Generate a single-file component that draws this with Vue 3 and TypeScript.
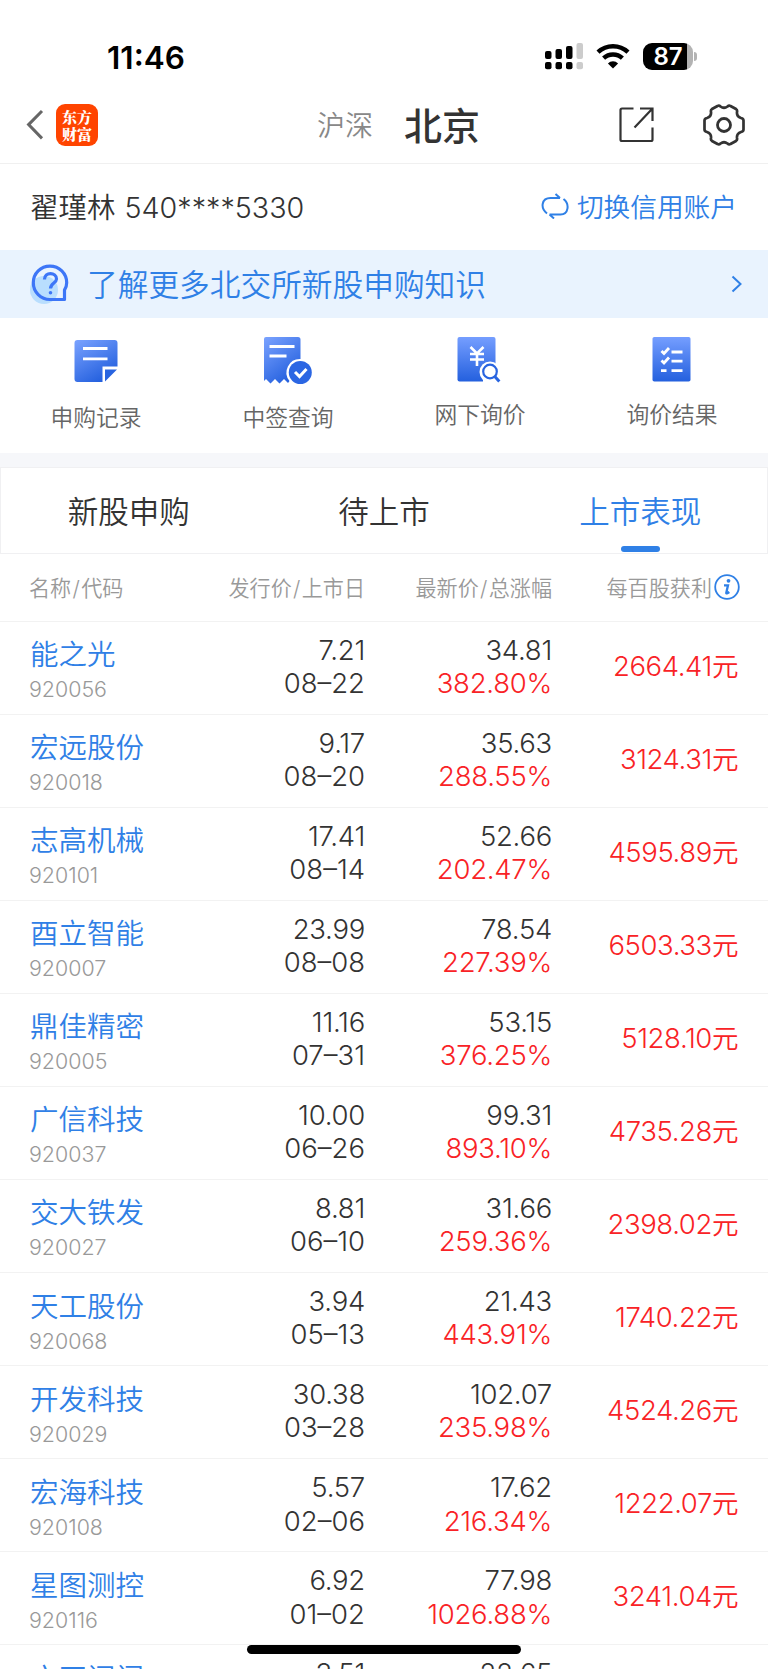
<script setup lang="ts">
interface Stock {
  name: string
  code: string
  issue: string
  date: string
  price: string
  change: string
  profit: string
}

const make = (
  name: string, code: string, issue: string, date: string,
  price: string, change: string, profit: string,
): Stock => ({ name, code, issue, date, price, change, profit })

const stocks: Stock[] = [
  make('能之光', '920056', '7.21', '08–22', '34.81', '382.80%', '2664.41'),
  make('宏远股份', '920018', '9.17', '08–20', '35.63', '288.55%', '3124.31'),
  make('志高机械', '920101', '17.41', '08–14', '52.66', '202.47%', '4595.89'),
  make('酉立智能', '920007', '23.99', '08–08', '78.54', '227.39%', '6503.33'),
  make('鼎佳精密', '920005', '11.16', '07–31', '53.15', '376.25%', '5128.10'),
  make('广信科技', '920037', '10.00', '06–26', '99.31', '893.10%', '4735.28'),
  make('交大铁发', '920027', '8.81', '06–10', '31.66', '259.36%', '2398.02'),
  make('天工股份', '920068', '3.94', '05–13', '21.43', '443.91%', '1740.22'),
  make('开发科技', '920029', '30.38', '03–28', '102.07', '235.98%', '4524.26'),
  make('宏海科技', '920108', '5.57', '02–06', '17.62', '216.34%', '1222.07'),
  make('星图测控', '920116', '6.92', '01–02', '77.98', '1026.88%', '3241.04'),
  make('方正阀门', '', '3.51', '', '22.65', '', ''),
]
</script>

<template>
  <div class="screen">
    <div class="status">
      <span class="clock">11:46</span>
      <svg class="signal" width="38" height="27" viewBox="0 0 38 27">
        <rect x="0" y="8" width="6.5" height="8" rx="2" />
        <rect x="10.5" y="6" width="6.5" height="10" rx="2" />
        <rect x="21" y="3" width="6.5" height="13" rx="2" />
        <rect x="31.5" y="0" width="6.5" height="16" rx="2" fill="#ccc" />
        <rect x="0" y="19" width="6.5" height="7.3" rx="2" />
        <rect x="10.5" y="19" width="6.5" height="7.3" rx="2" />
        <rect x="21" y="19" width="6.5" height="7.3" rx="2" />
        <rect x="31.5" y="19" width="6.5" height="7.3" rx="2" fill="#ccc" />
      </svg>
      <svg class="wifi" width="34" height="25" viewBox="0 0 34 25">
        <path d="M2 8.2a21.8 21.8 0 0 1 30 0M7.6 14.2a13.7 13.7 0 0 1 18.8 0" fill="none" stroke="#000" stroke-width="4.4" />
        <path d="M17 24.5 11.9 19.4a7.3 7.3 0 0 1 10.2 0z" />
      </svg>
      <div class="battery">
        <span class="charge">87</span>
        <i class="nub"></i>
      </div>
    </div>

    <header class="nav">
      <svg class="back" width="18" height="32" viewBox="0 0 18 32">
        <path d="M16 2 2.6 15.6 16 29.4" fill="none" stroke="#666" stroke-width="3" />
      </svg>
      <div class="brand"><span>东方</span><span>财富</span></div>
      <span class="market">沪深</span>
      <span class="market current">北京</span>
      <svg class="share" width="36" height="36" viewBox="0 0 36 36">
        <path d="M14.5 1.5H3Q1.5 1.5 1.5 3V32.5Q1.5 34 3 34H32Q33.5 34 33.5 32.5V20.5M21 1.5H33.500V14M33.500 1.500 15.500 20.500" fill="none" stroke="#333" stroke-width="2.200" />
      </svg>
      <svg class="gear" width="42" height="42" viewBox="0 0 42 42">
        <path d="M14.500 2Q16 1 17.500 2.500Q21 5 24.500 2.500Q26 1 27.500 2L33 5Q34.500 6 34 8Q33.500 12.500 38 14Q40.500 14.500 40.500 16.500V25.500Q40.500 27.500 38 28Q33.500 29.500 34 34Q34.500 36 33 37L27.500 40Q26 41 24.500 39.500Q21 37 17.500 39.500Q16 41 14.500 40L9 37Q7.500 36 8 34Q8.500 29.500 4 28Q1.500 27.500 1.500 25.500V16.500Q1.500 14.500 4 14Q8.500 12.500 8 8Q7.500 6 9 5Z" fill="none" stroke="#333" stroke-width="2.700" />
        <circle cx="21" cy="21" r="6.500" fill="none" stroke="#333" stroke-width="2.800" />
      </svg>
    </header>

    <section class="account">
      <span class="owner">翟瑾林 <span class="num">540****5330</span></span>
      <svg class="swap" width="28" height="26" viewBox="0 0 28 26">
        <path d="M6 20.500C-1 15 .5 5 9.500 5H19M14.500 1 19 5M22.500 6C29 11 27.500 21.500 19.500 21.500H8.500M13 25.500 8.500 21.500" fill="none" stroke="#2f80e6" stroke-width="2" />
      </svg>
      <span class="switch">切换信用账户</span>
    </section>

    <section class="notice">
      <svg class="help" width="42" height="42" viewBox="0 0 42 42">
        <circle cx="15" cy="27" r="14" fill="#b9defe" />
        <path d="M35.500 36.500H21A16.700 16.700 0 1 1 37.700 19.800Q37.700 24 35.500 27Z" fill="none" stroke="#3d76f7" stroke-width="3.200" stroke-linejoin="round" />
        <path d="M15.500 16.500C15.500 8.500 27.500 9 27.500 16C27.500 20 21.500 20 21.500 25.500" fill="none" stroke="#3d76f7" stroke-width="3.200" />
        <circle cx="21.500" cy="29.800" r="1.800" fill="#3d76f7" />
      </svg>
      <span class="notice-text">了解更多北交所新股申购知识</span>
      <svg class="more" width="12" height="18" viewBox="0 0 12 18">
        <path d="m1.500 1.500 8 7.500-8 7.500" fill="none" stroke="#2f80e6" stroke-width="2" />
      </svg>
    </section>

    <nav class="actions">
      <div class="action">
        <svg width="50" height="50" viewBox="0 0 50 50">
          <defs>
            <linearGradient id="fill" x1="0" y1="0" x2=".6" y2="1"><stop stop-color="#7ba3ff" /><stop offset="1" stop-color="#2460de" /></linearGradient>
            <linearGradient id="down" x1="0" y1="0" x2="0" y2="1"><stop stop-color="#759eff" /><stop offset="1" stop-color="#2460de" /></linearGradient>
          </defs>
          <path d="M6.500 3h37q3 0 3 3V29.500H31.500v15.500h-25q-3 0-3-3v-36q0-3 3-3Z" fill="url(#fill)" />
          <path d="M34 32.500h12L34 44.500Z" fill="#2864e0" />
          <path d="M12 11.500h24.500M12 21.800h24.500" stroke="#fff" stroke-width="2.800" />
        </svg>
        <span>申购记录</span>
      </div>
      <div class="action">
        <svg width="50" height="50" viewBox="0 0 50 50">
          <path d="M3 0h32q2.500 0 2.500 2.500V22A13.500 13.500 0 0 0 26.500 44L25 46 21 42 16.500 46.500 12 42 7.500 46.500 3 42 1 44V2q0-2 2-2Z" fill="url(#fill)" />
          <circle cx="37.300" cy="35.500" r="11.500" fill="#2b66e3" />
          <path d="M6.500 9.500h25M6.500 19h17" stroke="#fff" stroke-width="2.800" />
          <path d="m32 35 4.500 4.500 7-7.500" fill="none" stroke="#fff" stroke-width="3" />
        </svg>
        <span>中签查询</span>
      </div>
      <div class="action raised">
        <svg width="50" height="50" viewBox="0 0 50 50">
          <path d="M4.500 0h34q2 0 2 2v40.500q0 2-2 2h-34q-2 0-2-2V2q0-2 2-2Z" fill="url(#down)" />
          <path d="M15.500 10 22 16.500l6.500-6.500M22 16.500v12.500M15 17h14M15 22.500h14" fill="none" stroke="#fff" stroke-width="2.600" />
          <circle cx="35" cy="35" r="10.500" fill="#fff" /><path d="M28 42h14v6H28z" fill="#fff" />
          <circle cx="35" cy="34.500" r="6.800" fill="#fff" stroke="#2864e0" stroke-width="2.200" />
          <path d="m39.800 39.500 4.500 5" stroke="#2864e0" stroke-width="3" />
        </svg>
        <span>网下询价</span>
      </div>
      <div class="action raised">
        <svg width="50" height="50" viewBox="0 0 50 50">
          <rect x="5.500" y="0" width="38" height="44.500" rx="1.800" fill="url(#down)" />
          <path d="m14.500 14 2.500 2.500 5-5.500M14.500 23.500 17 26l5-5.500M24.500 15H35.500M24.500 24.200H35.500M24.500 33.700H35.500M14 33.700h5.500" fill="none" stroke="#fff" stroke-width="2.800" />
        </svg>
        <span>询价结果</span>
      </div>
    </nav>

    <nav class="tabs">
      <span class="tab">新股申购</span>
      <span class="tab">待上市</span>
      <span class="tab active">上市表现</span>
    </nav>

    <div class="cols head">
      <span>名称<i class="slash">/</i>代码</span>
      <span class="right">发行价<i class="slash">/</i>上市日</span>
      <span class="right">最新价<i class="slash">/</i>总涨幅</span>
      <span class="gain">每百股获利<svg width="26" height="26" viewBox="0 0 26 26">
        <circle cx="13" cy="13" r="11.800" fill="none" stroke="#2f80e6" stroke-width="1.800" />
        <circle cx="14.500" cy="6.800" r="1.900" fill="#2f80e6" />
        <path d="M10 11.300h4L12.300 18.800q-.2 1.500 3-.800" fill="none" stroke="#2f80e6" stroke-width="2.300" />
      </svg></span>
    </div>

    <div v-for="stock in stocks" :key="stock.name" class="cols row">
      <div class="title">
        <span class="name">{{ stock.name }}</span>
        <span class="code">{{ stock.code }}</span>
      </div>
      <div class="pair"><span class="tight">{{ stock.issue }}</span><span>{{ stock.date }}</span></div>
      <div class="pair"><span class="tight">{{ stock.price }}</span><span class="tight red">{{ stock.change }}</span></div>
      <div class="profit red"><template v-if="stock.profit">{{ stock.profit }}<span class="yuan">元</span></template></div>
    </div>

    <div class="home"></div>
  </div>
</template>

<style>
body { margin: 0; background: #fff; }
</style>

<style scoped>
.screen {
  position: relative; width: 768px; height: 1669px; overflow: hidden; background: #fff;
  font-family: Inter, "Noto Sans CJK SC", sans-serif; font-weight: 350; color: #333;
}
svg { display: block; flex: none; }
span { white-space: nowrap; }
.status { display: flex; align-items: flex-start; height: 84px; box-sizing: border-box; padding: 43px 70px 0 107px; }
.clock { font-size: 31.500px; line-height: 29px; font-weight: 600; color: #000; width: 438px; }
.wifi { margin: 1px 13px 0 13px; }
.battery { position: relative; width: 50px; height: 27px; border-radius: 9px; background: linear-gradient(90deg, #000 44px, #b3b3b3 44px); }
.charge { display: block; text-align: center; font-size: 24px; line-height: 27px; font-weight: 600; color: #fff; }
.nub { position: absolute; left: 51px; top: 9px; width: 3px; height: 9px; border-radius: 0 4px 4px 0; background: #b3b3b3; }
.nav { display: flex; align-items: center; height: 79px; border-bottom: 1px solid #f0f0f0; padding-left: 26px; }
.nav > * { margin-top: 2px; }
.brand {
  width: 42px; height: 42px; margin-left: 12px; border-radius: 9px; background: #ff4400; color: #fff;
  display: flex; flex-direction: column; align-items: center; justify-content: center;
  font: 900 15px/17px "Noto Serif CJK SC", "Noto Sans CJK SC", sans-serif;
}
.market { font-size: 28px; line-height: 40px; color: #888; margin-left: 219px; margin-top: 4px; }
.market.current { font-size: 38px; font-weight: 500; color: #333; margin-left: 31px; }
.share { margin-left: 139px; }
.gear { margin-left: 48px; }
.account { display: flex; align-items: center; height: 83px; padding: 0 31px 3px 30px; }
.owner { font-size: 28.500px; flex: 1; }
.num { font-size: 28.700px; margin-left: 1px; }
.swap { margin-right: 8px; }
.switch { font-size: 26.700px; color: #2f80e6; }
.notice { display: flex; align-items: center; height: 68px; padding: 0 25px 0 29px; background: #e9f3fe; color: #2f80e6; }
.notice-text { font-size: 30.700px; margin: -4px 0 0 16px; flex: 1; }
.actions { display: grid; grid-template-columns: repeat(4, 192px); height: 135px; color: #666; border-bottom: 14px solid #f6f7fa; }
.action { display: flex; flex-direction: column; align-items: center; padding-top: 19px; }
.action span { font-size: 22.800px; line-height: 32px; margin-top: 15px; }
.action.raised span { margin-top: 12px; }
.tabs { display: grid; grid-template-columns: repeat(3, 1fr); height: 85px; border: 1px solid #f0f0f2; font-size: 30.500px; }
.tab { display: flex; justify-content: center; line-height: 88px; position: relative; }
.active { color: #2f80e6; padding-left: 2px; }
.active::after { content: ""; position: absolute; bottom: 4px; width: 39px; height: 6px; border-radius: 3px; background: #2f80e6; }
.cols { display: grid; grid-template-columns: 170px 165px 187px 186px; box-sizing: border-box; padding-left: 30px; border-bottom: 1px solid #f2f2f2; }
.head { height: 67.500px; align-items: center; font-size: 21.100px; color: #999; padding-bottom: 0; }
.head > span { margin-left: -1px; }
.slash { font-style: normal; margin: 0 1.300px; }
.right { text-align: right; }
.gain { display: flex; align-items: center; justify-content: flex-end; margin-right: -2px; }
.gain svg { margin-left: 2px; }
.row { height: 93.080px; }
.title { display: flex; flex-direction: column; }
.name { font-size: 28.500px; line-height: 40px; color: #2f80e6; margin-top: 13.500px; }
.code { font-size: 21.400px; line-height: 28px; color: #999; margin-left: -1px; }
.pair { display: flex; flex-direction: column; align-items: flex-end; font-size: 27.500px; line-height: 33.300px; padding-top: 12px; }
.tight { letter-spacing: -.25px; }
.profit { text-align: right; font-size: 27.500px; line-height: 88px; letter-spacing: -.4px; }
.yuan { font-size: 26.500px; }
.red { color: #f92226; }
.home { position: absolute; left: 247px; top: 1645px; width: 274px; height: 9px; border-radius: 5px; background: #000; }
</style>
